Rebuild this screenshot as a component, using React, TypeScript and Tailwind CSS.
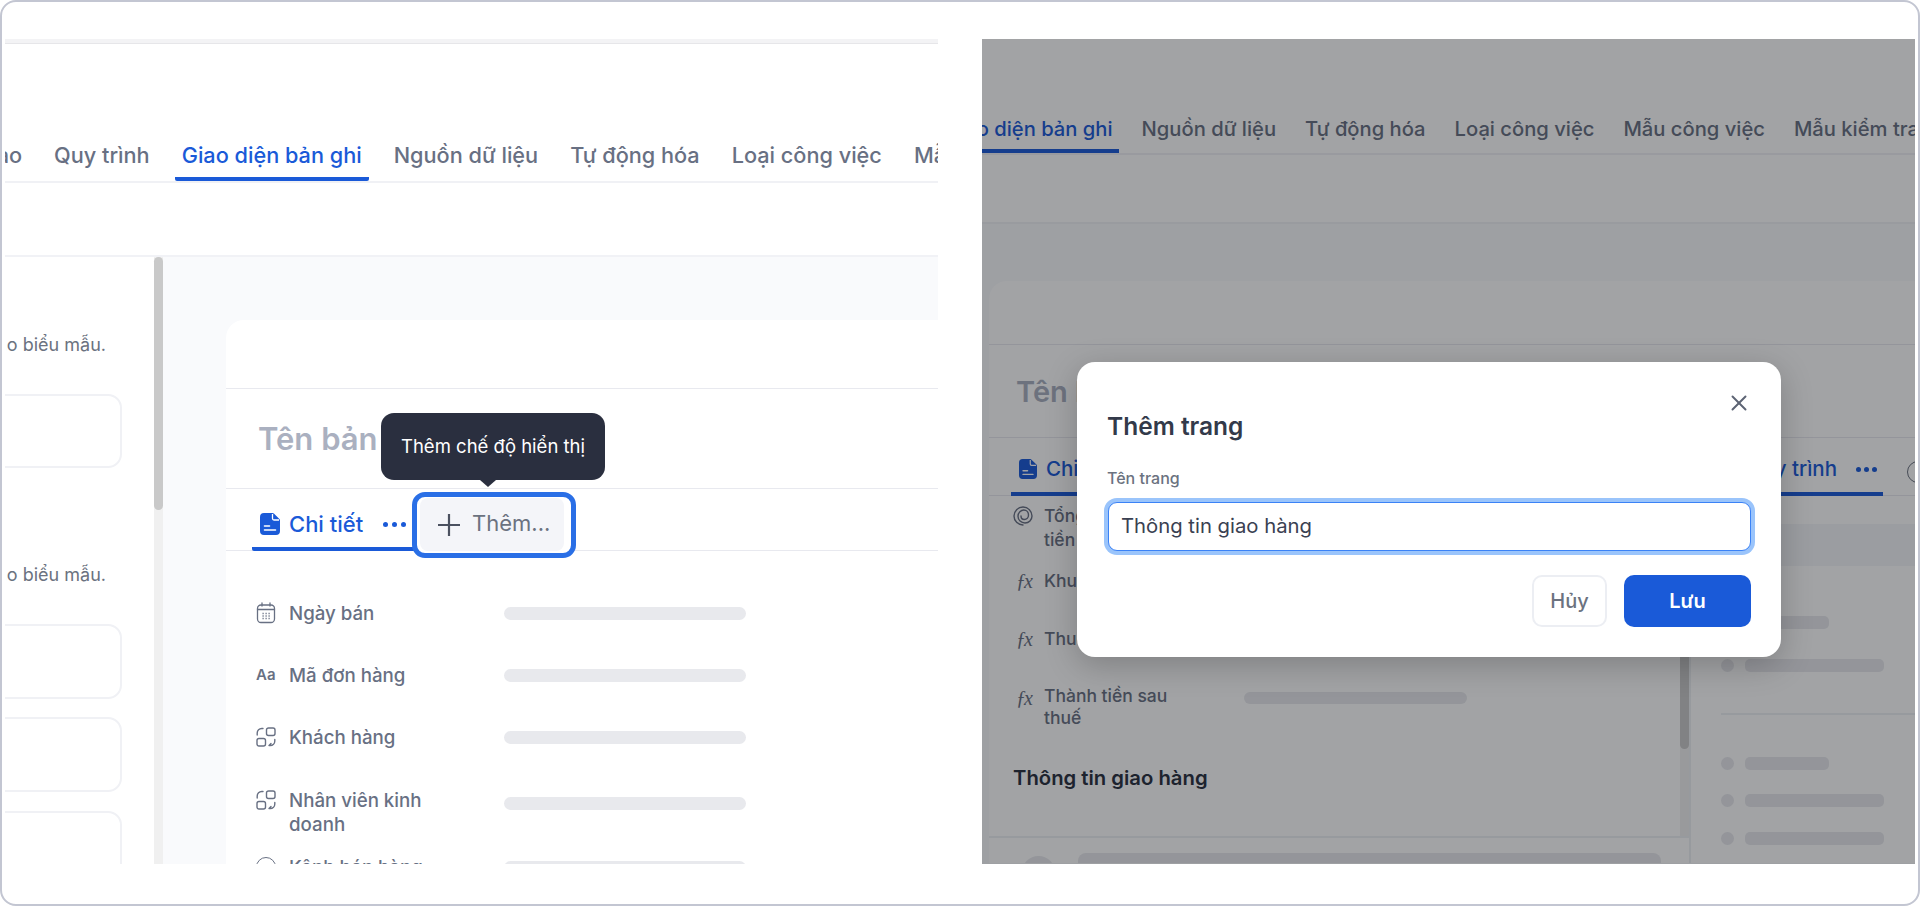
import { X } from "lucide-react";

const leftTabs = ["Giao", "Quy trình", "Giao diện bản ghi", "Nguồn dữ liệu", "Tự động hóa", "Loại công việc", "Mẫu công việc"];
const rightTabs = ["Giao diện bản ghi", "Nguồn dữ liệu", "Tự động hóa", "Loại công việc", "Mẫu công việc", "Mẫu kiểm tra"];

function DocIcon({ className }: { className: string }) {
	return (
		<svg viewBox="0 0 20 22" className={className} fill="none">
			<path d="M4 0h8.500c.5 0 1 .2 1.400.6l5.500 5.500c.4.4.6.9.6 1.400V18a4 4 0 0 1-4 4H4a4 4 0 0 1-4-4V4a4 4 0 0 1 4-4Z" fill="currentColor" />
			<path d="M12.500 1v4.500a1.500 1.500 0 0 0 1.500 1.500h5" stroke="#fff" strokeWidth="1.300" />
			<path d="M4.500 13h5M4.500 17h11" stroke="#fff" strokeWidth="1.600" strokeLinecap="round" />
		</svg>
	);
}

function CalendarIcon() {
	return (
		<svg viewBox="0 0 20 22" className="h-[22px] w-[20px]" fill="none" stroke="currentColor" strokeWidth="1.300">
			<rect x="1.500" y="3" width="17" height="17.500" rx="3.500" />
			<path d="M1.500 7.500h17M6 1v3M14 1v3" strokeLinecap="round" />
			<path d="M6.500 11.500h1.200M9.500 11.500h1.200M12.500 11.500h1.200M6.500 14h1.200M9.500 14h1.200M12.500 14h1.200M6.500 16.500h1.200M9.500 16.500h1.200M12.500 16.500h1.200" />
		</svg>
	);
}

function RelationIcon() {
	return (
		<svg viewBox="0 0 20 20" className="h-[20px] w-[20px]" fill="none" stroke="currentColor" strokeWidth="1.400">
			<rect x="10.500" y="1" width="8.500" height="7.500" rx="2" />
			<rect x="1" y="11.500" width="8.500" height="7.500" rx="2" />
			<path d="M1.200 8V6a4.500 4.500 0 0 1 4.500-4.500H7" strokeLinecap="round" />
			<path d="M18.800 12.500V14a4.500 4.500 0 0 1-4.500 4.500H13M15 16.500l-2 2" strokeLinecap="round" />
		</svg>
	);
}

function SpiralIcon() {
	return (
		<svg viewBox="0 0 20 20" className="h-[20px] w-[20px]" fill="none" stroke="currentColor" strokeWidth="1.400" strokeLinecap="round">
			<path d="M10 19a9 9 0 1 1 9-9c0 3.900-3.100 7-7 7s-7-2.900-7-6.700S8 4 10.800 4 15.500 6.200 15.500 9s-1.900 4.500-4.200 4.500S8 12 8 10" />
		</svg>
	);
}

function MoreDots({ className }: { className: string }) {
	return (
		<div className={className}>
			<span className="h-[5px] w-[5px] rounded-full bg-current" />
			<span className="h-[5px] w-[5px] rounded-full bg-current" />
			<span className="h-[5px] w-[5px] rounded-full bg-current" />
		</div>
	);
}

function LeftPanel() {
	return (
		<section className="flex h-[825px] w-[933px] shrink-0 flex-col overflow-hidden">
			<div className="h-[5px] shrink-0 border-b border-[#e6e6e9] bg-[#f3f3f5]" />

			{/* tab strip scrolled sideways */}
			<div className="flex h-[139px] shrink-0 items-end overflow-hidden border-b-2 border-[#f0f1f5]">
				<div className="ml-[-37px] flex items-end gap-[18px]">
					{leftTabs.map((tab) => (
						<div
							key={tab}
							className={`shrink-0 whitespace-nowrap border-b-[4px] px-[7px] pb-[7px] text-[21.700px] leading-[30px] font-medium ${
								tab === "Giao diện bản ghi" ? "rounded-b-[2px] border-[#1a5ad8] text-[#1a5ad8]" : "border-transparent text-[#687083]"
							}`}
						>
							{tab}
						</div>
					))}
				</div>
			</div>

			<div className="h-[74px] shrink-0 border-b-2 border-[#f1f2f6]" />

			<div className="flex min-h-0 flex-1">
				{/* field palette */}
				<div className="w-[149px] shrink-0 overflow-hidden">
					<div className="mt-[74px] ml-[1px] flex h-[26px] items-center justify-end overflow-hidden pr-[48px] text-[18px] whitespace-nowrap text-[#6b7280]">
						Kéo thả vào biểu mẫu.
					</div>
					<div className="mt-[37px] ml-[-32px] h-[74px] w-[149px] rounded-[14px] border-2 border-[#f0f1f5]" />
					<div className="mt-[93px] ml-[1px] flex h-[26px] items-center justify-end overflow-hidden pr-[48px] text-[18px] whitespace-nowrap text-[#6b7280]">
						Kéo thả vào biểu mẫu.
					</div>
					<div className="mt-[37px] ml-[-32px] h-[75px] w-[149px] rounded-[14px] border-2 border-[#f0f1f5]" />
					<div className="mt-[18px] ml-[-32px] h-[75px] w-[149px] rounded-[14px] border-2 border-[#f0f1f5]" />
					<div className="mt-[19px] ml-[-32px] h-[75px] w-[149px] rounded-[14px] border-2 border-[#f0f1f5]" />
				</div>
				<div className="w-[9px] shrink-0 bg-[#f0f0f0]">
					<div className="h-[253px] rounded-full bg-[#c9c9c9]" />
				</div>

				<div className="min-w-0 flex-1 overflow-hidden bg-[#f9fafc] pt-[63px] pl-[63px]">
					<div className="relative h-[600px] rounded-tl-[18px] bg-white">
						<div className="h-[69px] border-b border-[#e8e9ef]" />
						<div className="flex h-[100px] items-center border-b border-[#e8e9ef] pl-[32px] text-[31px] leading-none font-semibold text-[#aab0c0]">
							Tên bản ghi
						</div>

						<div className="h-[62px] border-b border-[#e8e9ef] pl-[26px]">
							<div className="flex h-[62px] w-[175px] items-center gap-[9px] rounded-b-[2px] border-b-[4px] border-[#1a5ad8] pt-[12px] pl-[8px] text-[#1a5ad8]">
								<DocIcon className="h-[22px] w-[20px]" />
								<span className="text-[22px] leading-none font-medium">Chi tiết</span>
								<MoreDots className="ml-[11px] flex gap-[4px]" />
							</div>
						</div>

						{/* highlighted add-view button with its tooltip */}
						<div className="absolute top-[93px] left-[155px] flex h-[67px] w-[224px] flex-col items-center justify-center rounded-[13px] bg-[#2a2f3f] text-[18.500px] text-white">
							Thêm chế độ hiển thị
							<span className="absolute top-[67px] left-[99px] h-0 w-0 border-x-[8px] border-t-[7px] border-x-transparent border-t-[#2a2f3f]" />
						</div>
						<div className="absolute top-[172px] left-[186px] h-[66px] w-[164px] rounded-[13px] border-[5px] border-[#2a6fe6] bg-white px-[3px] pt-[1px]">
							<div className="flex h-[53px] w-[144px] items-center gap-[12px] rounded-[8px] bg-[#f4f5f9] pl-[18px] text-[#6b7280]">
								<svg viewBox="0 0 22 22" className="h-[22px] w-[22px] shrink-0" fill="none" stroke="#4b5160" strokeWidth="2.200">
									<path d="M11 0v22M0 11h22" />
								</svg>
								<span className="pb-[3px] text-[22px] leading-none">Thêm...</span>
							</div>
						</div>

						<div className="pl-[30px] text-[#687083]">
							<div className="mt-[31px] flex h-[62px] items-center">
								<div className="w-[33px]"><CalendarIcon /></div>
								<span className="w-[215px] pt-[2px] text-[18.700px] font-medium">Ngày bán</span>
								<div className="h-[13px] w-[242px] rounded-full bg-[#e8e9ed]" />
							</div>
							<div className="flex h-[62px] items-center">
								<div className="w-[33px] text-[15px] font-semibold">Aa</div>
								<span className="w-[215px] pt-[2px] text-[18.700px] font-medium">Mã đơn hàng</span>
								<div className="h-[13px] w-[242px] rounded-full bg-[#e8e9ed]" />
							</div>
							<div className="flex h-[62px] items-center">
								<div className="w-[33px]"><RelationIcon /></div>
								<span className="w-[215px] pt-[2px] text-[18.700px] font-medium">Khách hàng</span>
								<div className="h-[13px] w-[242px] rounded-full bg-[#e8e9ed]" />
							</div>
							<div className="flex h-[88px] items-start pt-[21px]">
								<div className="w-[33px] pt-[1px]"><RelationIcon /></div>
								<span className="w-[150px] text-[18.700px] leading-[24px] font-medium">Nhân viên kinh doanh</span>
								<div className="mt-[8px] ml-[65px] h-[13px] w-[242px] rounded-full bg-[#e8e9ed]" />
							</div>
							<div className="flex h-[22px] items-center">
								<div className="w-[33px]"><div className="h-[20px] w-[20px] rounded-full border-[1.500px] border-current" /></div>
								<span className="w-[215px] pt-[2px] text-[18.700px] font-medium">Kênh bán hàng</span>
								<div className="h-[13px] w-[242px] rounded-full bg-[#e8e9ed]" />
							</div>
						</div>
					</div>
				</div>
			</div>
		</section>
	);
}

function SideRow({ short }: { short?: boolean }) {
	return (
		<div className="flex items-center gap-[11px]">
			<span className="h-[13px] w-[13px] shrink-0 rounded-full bg-[#e8e9ed]" />
			<span className={`h-[13px] rounded-[5px] bg-[#e8e9ed] ${short ? "w-[84px]" : "w-[139px]"}`} />
		</div>
	);
}

function RightPanel() {
	return (
		<section className="relative flex h-[825px] w-[933px] shrink-0 flex-col overflow-hidden">
			<div className="flex h-[116px] shrink-0 items-end overflow-hidden border-b-2 border-[#f0f1f5]">
				<div className="ml-[-43px] flex items-end gap-[17px]">
					{rightTabs.map((tab) => (
						<div
							key={tab}
							className={`shrink-0 whitespace-nowrap border-b-[4px] px-[6px] pb-[6px] text-[20.200px] leading-[28px] font-medium ${
								tab === "Giao diện bản ghi" ? "border-[#1a5ad8] text-[#1a5ad8]" : "border-transparent text-[#687083]"
							}`}
						>
							{tab}
						</div>
					))}
				</div>
			</div>

			<div className="h-[69px] shrink-0 border-b-2 border-[#f1f2f6]" />

			<div className="min-h-0 flex-1 overflow-hidden bg-[#f9fafc] pt-[57px] pl-[7px]">
				<div className="h-[582px] rounded-tl-[18px] bg-white">
					<div className="h-[64px] border-b border-[#e8e9ef]" />
					<div className="flex h-[93px] items-center border-b border-[#e8e9ef] pl-[27px] text-[29px] leading-none font-semibold text-[#aab0c0]">
						Tên bản ghi
					</div>

					<div className="flex h-[58px] items-start border-b border-[#e8e9ef] pl-[22px]">
						<div className="flex h-[58px] w-[872px] shrink-0 items-center border-b-[4px] border-[#1a5ad8] pt-[8px] pl-[8px] text-[#1a5ad8]">
							<DocIcon className="h-[20px] w-[18px]" />
							<span className="ml-[9px] text-[20.500px] leading-none font-medium">Chi tiết</span>
							<span className="ml-auto text-[20.500px] leading-none font-medium">Quy trình</span>
							<MoreDots className="mr-[6px] ml-[19px] flex gap-[3px]" />
						</div>
						<div className="mt-[23px] ml-[24px] h-[22px] w-[22px] shrink-0 rounded-full border-[1.500px] border-[#6b7280]" />
					</div>

					<div className="flex h-[367px]">
						<div className="flex w-[702px] shrink-0 flex-col border-r-2 border-[#eef0f4]">
							<div className="flex h-[340px] shrink-0">
								<div className="min-w-0 flex-1 pl-[24px] text-[#687083]">
									<div className="flex h-[66px] items-start pt-[8px]">
										<div className="w-[31px] pt-[2px]"><SpiralIcon /></div>
										<span className="w-[125px] text-[17.500px] leading-[24px] font-medium">Tổng thành tiền</span>
									</div>
									<div className="flex h-[38px] items-center">
										<div className="w-[31px] pl-[3px] font-['Liberation_Serif',serif] text-[20px] leading-none tracking-[-2px] italic">ƒx</div>
										<span className="text-[17.500px] font-medium">Khuyến mãi</span>
									</div>
									<div className="flex h-[78px] items-center">
										<div className="w-[31px] pl-[3px] font-['Liberation_Serif',serif] text-[20px] leading-none tracking-[-2px] italic">ƒx</div>
										<span className="text-[17.500px] font-medium">Thuế</span>
									</div>
									<div className="flex h-[58px] items-start pt-[7px]">
										<div className="w-[31px] pt-[3px] pl-[3px] font-['Liberation_Serif',serif] text-[20px] leading-none tracking-[-2px] italic">ƒx</div>
										<span className="w-[135px] text-[17.500px] leading-[22px] font-medium">Thành tiền sau thuế</span>
										<div className="mt-[7px] ml-[65px] h-[12px] w-[223px] rounded-full bg-[#e8e9ed]" />
									</div>
									<div className="mt-[29px] text-[20.300px] leading-[26px] font-semibold text-[#2a2f3f]">Thông tin giao hàng</div>
								</div>
								<div className="w-[9px] shrink-0 bg-[#f0f0f0]">
									<div className="h-[253px] rounded-full bg-[#c9c9c9]" />
								</div>
							</div>
							<div className="flex flex-1 gap-[23px] overflow-hidden border-t-2 border-[#eef0f4] pl-[33px]">
								<div className="mt-[18px] h-[33px] w-[33px] shrink-0 rounded-full bg-[#e8e9ed]" />
								<div className="mt-[15px] h-[40px] w-[583px] shrink-0 rounded-[8px] bg-[#e8e9ed]" />
							</div>
						</div>

						<div className="min-w-0 flex-1">
							<div className="mt-[28px] h-[42px] bg-[#f4f5f8]" />
							<div className="mt-[50px] pl-[30px]"><SideRow short /></div>
							<div className="mt-[30px] pl-[30px]"><SideRow /></div>
							<div className="mt-[41px] ml-[30px] h-[2px] bg-[#eef0f4]" />
							<div className="mt-[42px] pl-[30px]"><SideRow short /></div>
							<div className="mt-[24px] pl-[30px]"><SideRow /></div>
							<div className="mt-[25px] pl-[30px]"><SideRow /></div>
						</div>
					</div>
				</div>
			</div>

			{/* dialog backdrop */}
			<div className="absolute inset-0 bg-[#0d0f16]/[0.385]" />

			<div className="absolute top-[323px] left-[95px] h-[295px] w-[704px] rounded-[18px] bg-white px-[30px] pt-[48px] shadow-[0_8px_32px_rgba(0,0,0,0.22)]">
				<button className="absolute top-[28px] right-[29px] text-[#5d6474]">
					<X className="h-[26px] w-[26px]" strokeWidth={1.800} />
				</button>
				<h2 className="text-[24.500px] leading-[32px] font-semibold text-[#333a4a]">Thêm trang</h2>
				<label className="mt-[26px] block text-[16px] leading-[20px] font-medium text-[#6b7280]">Tên trang</label>
				<input
					readOnly
					value="Thông tin giao hàng"
					className="mt-[14px] ml-[1px] h-[49px] w-[643px] rounded-[9px] border border-[#3b82f6] bg-white px-[12px] pb-[2px] text-[20.300px] text-[#3a4152] ring-[4px] ring-[#9ac4fb] outline-none"
				/>
				<div className="mt-[24px] flex w-[644px] justify-end gap-[17px]">
					<button className="h-[52px] w-[75px] rounded-[10px] border-2 border-[#eceef3] text-[20px] font-medium text-[#6b7280]">Hủy</button>
					<button className="h-[52px] w-[127px] rounded-[10px] bg-[#1a5ad8] text-[20px] font-semibold text-white">Lưu</button>
				</div>
			</div>
		</section>
	);
}

export default function App() {
	return (
		<div className="flex h-[906px] w-[1920px] gap-[44px] overflow-hidden rounded-[16px] border-2 border-[#c3c6d2] bg-white pt-[37px] pl-[3px] font-['Inter',sans-serif]">
			<LeftPanel />
			<RightPanel />
		</div>
	);
}
